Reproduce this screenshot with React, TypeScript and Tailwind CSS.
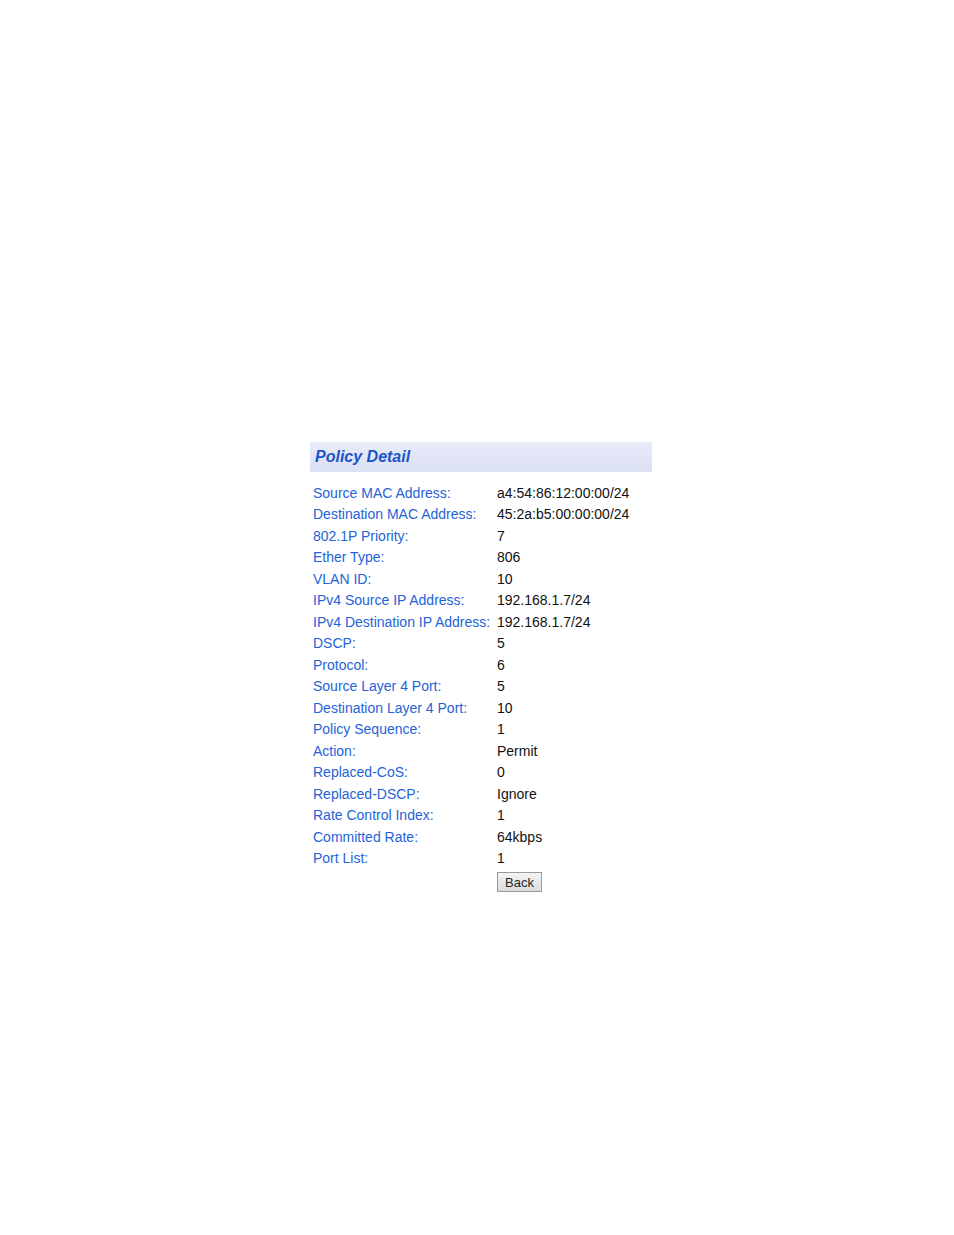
import React from "react";

const rows: [string, string][] = [
  ["Source MAC Address:", "a4:54:86:12:00:00/24"],
  ["Destination MAC Address:", "45:2a:b5:00:00:00/24"],
  ["802.1P Priority:", "7"],
  ["Ether Type:", "806"],
  ["VLAN ID:", "10"],
  ["IPv4 Source IP Address:", "192.168.1.7/24"],
  ["IPv4 Destination IP Address:", "192.168.1.7/24"],
  ["DSCP:", "5"],
  ["Protocol:", "6"],
  ["Source Layer 4 Port:", "5"],
  ["Destination Layer 4 Port:", "10"],
  ["Policy Sequence:", "1"],
  ["Action:", "Permit"],
  ["Replaced-CoS:", "0"],
  ["Replaced-DSCP:", "Ignore"],
  ["Rate Control Index:", "1"],
  ["Committed Rate:", "64kbps"],
  ["Port List:", "1"],
];

export default function App() {
  return (
    <div className="w-[954px] h-[1235px] bg-white font-['Liberation_Sans',Arial,sans-serif]">
      <div className="pt-[442px] pl-[310px]">
        <div className="w-[342px] h-[30px] bg-gradient-to-b from-[#e8ebf8] to-[#dce0f4] flex items-center pl-[5px]">
          <span className="text-[16px] font-bold italic text-[#1a55c8] leading-none">
            Policy Detail
          </span>
        </div>
        <div className="pt-[10px] pl-[3px]">
          {rows.map(([k, v]) => (
            <div key={k} className="flex h-[21.5px] items-center text-[14px] leading-none">
              <div className="w-[184px] text-[#2463d8] whitespace-nowrap">{k}</div>
              <div className="text-[#111]">{v}</div>
            </div>
          ))}
          <div className="flex pt-[3px]">
            <div className="w-[184px]" />
            <button className="w-[45px] h-[20px] border border-[#9a9a9a] bg-gradient-to-b from-[#f4f4f4] to-[#dcdcdc] text-[13px] text-[#222] leading-none">
              Back
            </button>
          </div>
        </div>
      </div>
    </div>
  );
}
